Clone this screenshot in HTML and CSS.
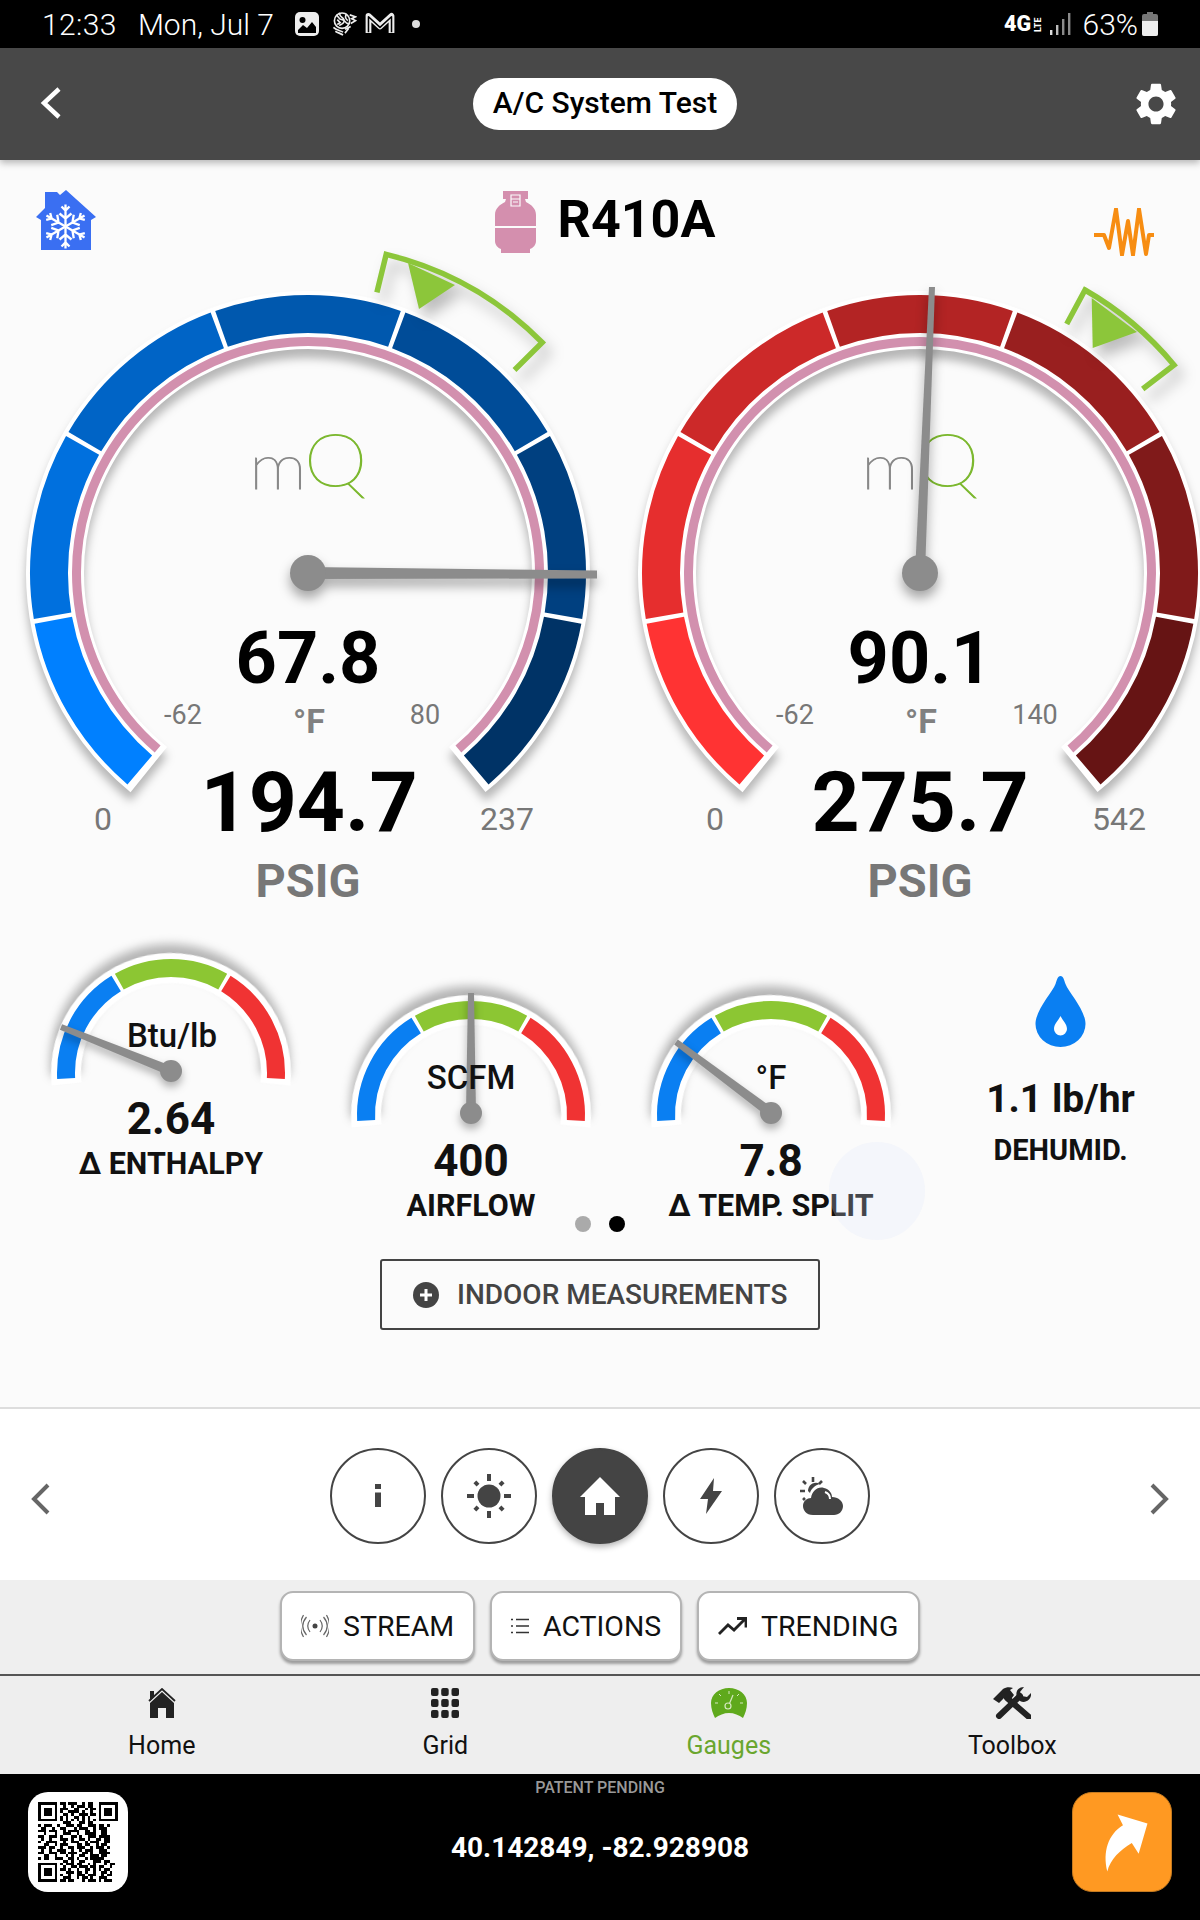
FILE: index.html
```html
<!DOCTYPE html>
<html lang="en">
<head>
    <meta charset="UTF-8">
    <meta name="viewport" content="width=device-width, initial-scale=1.0">
    <title>A/C System Test</title>
    <link rel="stylesheet" href="styles.css">
</head>
<body>
<div class="app">

    <!-- phone status bar -->
    <div class="statusbar">
        <span class="clock">12:33</span>
        <span class="date">Mon, Jul 7</span>
        <svg class="st-icon st-image" viewBox="0 0 24 24"><rect width="24" height="24" rx="5" fill="#eee"/><circle cx="7.500" cy="8" r="3" fill="#000"/><path d="M3 21v-3l5-5 4 3 5-6 4 5v6z" fill="#000"/></svg>
        <svg class="st-icon st-globe" viewBox="0 0 27 25" fill="none" stroke="#eee" stroke-width="1.700"><circle cx="12" cy="9" r="8"/><path d="M6 3c3 2 2 5 6 5s3 5 7 4M10 1c-2 4 3 4 4 7s-2 5-5 6M17 2c-2 2-2 5 1 7M7 8l3 3-3 2M20 3l6 2-4 2 4 2-5 3M3 16c3 3 7 3 10 5M5 20c3 2 5 2 8 4M15 18l6-3M15 22l4-5"/></svg>
        <svg class="st-icon st-mail" viewBox="0 0 30 25" fill="none"><path d="M3 22V4l12 11L27 4v18" stroke="#eee" stroke-width="6" stroke-linejoin="round"/><path d="M3 21V5l12 11L27 5v16" stroke="#000" stroke-width="1.600" stroke-linejoin="round"/></svg>
        <span class="st-dot"></span>
        <span class="st-spacer"></span>
        <svg class="st-net" viewBox="0 0 38 26"><text class="st-4g" x="0" y="20" textLength="27" lengthAdjust="spacingAndGlyphs">4G</text><text class="st-lte" transform="translate(37 21) rotate(-90)">LTE</text></svg>
        <svg class="st-signal" viewBox="0 0 21 22" fill="#8a8a8a"><rect y="17" width="2.400" height="5" fill="#ddd"/><rect x="6" y="12" width="2.400" height="10" fill="#bbb"/><rect x="12" y="6" width="2.400" height="16"/><rect x="18" width="2.400" height="22"/></svg>
        <span class="battery-pct">63%</span>
        <svg class="st-battery" viewBox="0 0 16 24"><path d="M5 0h6v2h3a2 2 0 0 1 2 2v18a2 2 0 0 1-2 2H2a2 2 0 0 1-2-2V4a2 2 0 0 1 2-2h3z" fill="#777"/><path d="M0 9h16v13a2 2 0 0 1-2 2H2a2 2 0 0 1-2-2z" fill="#eee"/></svg>
    </div>

    <header class="appbar">
        <svg class="back-icon" viewBox="0 0 22 32" fill="none" stroke="#fff" stroke-width="4.500"><path d="M19 2L4 16l15 14"/></svg>
        <div class="title-pill">A/C System Test</div>
        <svg class="gear-icon" viewBox="2.400 2 19.200 20" fill="#fff"><path d="M19.14 12.94c.04-.3.06-.61.06-.94 0-.32-.02-.64-.07-.94l2.03-1.58c.18-.14.23-.41.12-.61l-1.92-3.32c-.12-.22-.37-.29-.59-.22l-2.39.96c-.5-.38-1.03-.7-1.62-.94l-.36-2.54c-.04-.24-.24-.41-.48-.41h-3.84c-.24 0-.43.17-.47.41l-.36 2.54c-.59.24-1.13.57-1.62.94l-2.39-.96c-.22-.08-.47 0-.59.22L2.74 8.87c-.12.21-.08.47.12.61l2.03 1.58c-.05.3-.09.63-.09.94s.02.64.07.94l-2.03 1.58c-.18.14-.23.41-.12.61l1.92 3.32c.12.22.37.29.59.22l2.39-.96c.5.38 1.03.7 1.62.94l.36 2.54c.05.24.24.41.48.41h3.84c.24 0 .44-.17.47-.41l.36-2.54c.59-.24 1.13-.56 1.62-.94l2.39.96c.22.08.47 0 .59-.22l1.92-3.32c.12-.22.07-.47-.12-.61l-2.01-1.58zM12 15.6c-1.98 0-3.6-1.62-3.6-3.6s1.62-3.6 3.6-3.6 3.6 1.62 3.6 3.6-1.62 3.6-3.6 3.6z"/></svg>
    </header>

    <main class="content">
        <div class="refrigerant-row">
            <svg class="house-icon" viewBox="0 0 60 60">
                <path d="M0 27l9-9V2h12l3 3 6-5 30 27-5 3v30H5V30z" fill="#3a6ff2"/>
                <g transform="translate(29.500 36.500)" fill="none" stroke="#fff" stroke-width="2.300">
                    <g id="flakeArm"><path d="M0 0v-22M-4 -20l4 4 4-4M-6 -13l6 5 6-5"/></g>
                    <use href="#flakeArm" transform="rotate(60)"/>
                    <use href="#flakeArm" transform="rotate(120)"/>
                    <use href="#flakeArm" transform="rotate(180)"/>
                    <use href="#flakeArm" transform="rotate(240)"/>
                    <use href="#flakeArm" transform="rotate(300)"/>
                </g>
            </svg>
            <div class="refrigerant">
                <svg class="tank-icon" viewBox="0 0 41 63">
                    <path d="M8 1h25v8h-3l1 3c6 3 10 7 10 13v11H0V25c0-6 4-10 10-13l1-3H8z" fill="#d48fae"/>
                    <path d="M0 38h41v13c0 4-3 7-6 8v4H6v-4c-3-1-6-4-6-8z" fill="#d48fae"/>
                    <path d="M16 5h9v11h-9zM16 9h9M18 12h5" fill="none" stroke="#fbfbfb" stroke-width="1.200"/>
                </svg>
                <span class="refrigerant-name">R410A</span>
            </div>
            <svg class="wave-icon" viewBox="0 0 60 48" fill="none" stroke="#f78d12" stroke-width="4" stroke-linejoin="round"><path d="M0 27h10l5 13 7-39 6 46 6-34 5 34 6-46 7 45 3-19h5"/></svg>
        </div>

        <div class="gauge-row">
            <!-- low side -->
            <svg class="gauge" viewBox="-308 -333 612 680">
                <g class="ring-shadow" fill="none">
                    <circle r="253" stroke="#fff" stroke-width="58" pathLength="360" stroke-dasharray="282 78" transform="rotate(-231)"/>
                </g>
                <g fill="none" stroke-width="38">
                    <circle r="259" pathLength="360" stroke-dasharray="39 321" stroke="#0080ff" transform="rotate(-229.500)"/>
                    <circle r="259" pathLength="360" stroke-dasharray="39 321" stroke="#0070de" transform="rotate(-189.500)"/>
                    <circle r="259" pathLength="360" stroke-dasharray="39 321" stroke="#0064c6" transform="rotate(-149.500)"/>
                    <circle r="259" pathLength="360" stroke-dasharray="39 321" stroke="#0058ae" transform="rotate(-109.500)"/>
                    <circle r="259" pathLength="360" stroke-dasharray="39 321" stroke="#004c98" transform="rotate(-69.500)"/>
                    <circle r="259" pathLength="360" stroke-dasharray="39 321" stroke="#004080" transform="rotate(-29.500)"/>
                    <circle r="259" pathLength="360" stroke-dasharray="39 321" stroke="#003366" transform="rotate(10.500)"/>
                </g>
                <circle class="pink-line" r="231.500" pathLength="360" stroke-dasharray="279 81" transform="rotate(-229.500)"/>
                <g class="marker-shadow">
                    <path class="marker-bracket" d="M68.900 -280.700L78.200 -318.600A328 328 0 0 1 234.200 -230.500L206.500 -203"/>
                    <polygon class="marker-tip" points="100,-310 147,-288 111,-264"/>
                </g>
                <text class="logo-m" transform="translate(-59 -84) scale(1.180 1)">m</text>
                <text class="logo-q" transform="translate(-4 -87) scale(1.120 1)">Q</text>
                <text class="temp-value" x="0" y="110">67.8</text>
                <text class="temp-unit" x="1" y="160">°F</text>
                <text class="scale-small" x="-125" y="151">-62</text>
                <text class="scale-small" x="117" y="151">80</text>
                <text class="scale-big" x="-205" y="257">0</text>
                <text class="scale-big" x="199" y="257">237</text>
                <text class="pressure-value" x="1" y="258">194.7</text>
                <text class="pressure-unit" x="0" y="324">PSIG</text>
                <g class="needle-shadow">
                    <polygon class="needle" points="0,-6 289,-2.500 289,5.500 0,6"/>
                    <circle class="needle" r="18"/>
                </g>
            </svg>

            <!-- high side -->
            <svg class="gauge" viewBox="-308 -333 612 680">
                <g class="ring-shadow" fill="none">
                    <circle r="253" stroke="#fff" stroke-width="58" pathLength="360" stroke-dasharray="282 78" transform="rotate(-231)"/>
                </g>
                <g fill="none" stroke-width="38">
                    <circle r="259" pathLength="360" stroke-dasharray="39 321" stroke="#ff3333" transform="rotate(-229.500)"/>
                    <circle r="259" pathLength="360" stroke-dasharray="39 321" stroke="#e62e2e" transform="rotate(-189.500)"/>
                    <circle r="259" pathLength="360" stroke-dasharray="39 321" stroke="#cc2929" transform="rotate(-149.500)"/>
                    <circle r="259" pathLength="360" stroke-dasharray="39 321" stroke="#b32424" transform="rotate(-109.500)"/>
                    <circle r="259" pathLength="360" stroke-dasharray="39 321" stroke="#991f1f" transform="rotate(-69.500)"/>
                    <circle r="259" pathLength="360" stroke-dasharray="39 321" stroke="#801a1a" transform="rotate(-29.500)"/>
                    <circle r="259" pathLength="360" stroke-dasharray="39 321" stroke="#661414" transform="rotate(10.500)"/>
                </g>
                <circle class="pink-line" r="231.500" pathLength="360" stroke-dasharray="279 81" transform="rotate(-229.500)"/>
                <g class="marker-shadow">
                    <path class="marker-bracket" d="M146.700 -249L165 -283A328 328 0 0 1 254 -208L222.700 -184"/>
                    <polygon class="marker-tip" points="171.700,-275 217,-241 172.700,-225"/>
                </g>
                <text class="logo-m" transform="translate(-59 -84) scale(1.180 1)">m</text>
                <text class="logo-q" transform="translate(-4 -87) scale(1.120 1)">Q</text>
                <text class="temp-value" x="0" y="110">90.1</text>
                <text class="temp-unit" x="1" y="160">°F</text>
                <text class="scale-small" x="-125" y="151">-62</text>
                <text class="scale-small" x="115" y="151">140</text>
                <text class="scale-big" x="-205" y="257">0</text>
                <text class="scale-big" x="199" y="257">542</text>
                <text class="pressure-value" x="0" y="258">275.7</text>
                <text class="pressure-unit" x="0" y="324">PSIG</text>
                <g class="needle-shadow">
                    <polygon class="needle" points="-5,0 5,0 15,-286 9,-286"/>
                    <circle class="needle" r="18"/>
                </g>
            </svg>
        </div>

        <div class="mini-row">
            <div class="mini mini-high">
                <svg class="mini-gauge" viewBox="-130 -124 260 150">
                    <g id="miniDial" fill="none">
                        <circle class="ring-shadow-small" cy="2" r="105" stroke="#fff" stroke-width="30" pathLength="360" stroke-dasharray="192 168" transform="rotate(-186 0 2)"/>
                        <g stroke-width="18">
                            <circle cy="2" r="105" pathLength="360" stroke-dasharray="61.500 298.500" stroke="#0a7ff2" transform="rotate(-183 0 2)"/>
                            <circle cy="2" r="105" pathLength="360" stroke-dasharray="59 301" stroke="#8cc633" transform="rotate(-119.500 0 2)"/>
                            <circle cy="2" r="105" pathLength="360" stroke-dasharray="61.500 298.500" stroke="#f03333" transform="rotate(-58.500 0 2)"/>
                        </g>
                    </g>
                    <g class="needle-shadow-small">
                        <polygon class="needle" points="1.900,-4.600 -1.900,4.600 -111.100,-41.200 -108.900,-46.800"/>
                        <circle class="needle" r="11"/>
                    </g>
                    <text class="mini-unit" x="1" y="-24">Btu/lb</text>
                </svg>
                <div class="mini-value">2.64</div>
                <div class="mini-label">Δ ENTHALPY</div>
            </div>
            <div class="mini">
                <svg class="mini-gauge" viewBox="-130 -124 260 150">
                    <use href="#miniDial"/>
                    <g class="needle-shadow-small">
                        <polygon class="needle" points="-5,0 5,0 3,-120 -3,-120"/>
                        <circle class="needle" r="11"/>
                    </g>
                    <text class="mini-unit" x="0" y="-24">SCFM</text>
                </svg>
                <div class="mini-value">400</div>
                <div class="mini-label">AIRFLOW</div>
            </div>
            <div class="mini">
                <svg class="mini-gauge" viewBox="-130 -124 260 150">
                    <use href="#miniDial"/>
                    <g class="needle-shadow-small">
                        <polygon class="needle" points="3,-4 -3,4 -96.800,-68.600 -93.200,-73.400"/>
                        <circle class="needle" r="11"/>
                    </g>
                    <text class="mini-unit" x="0" y="-24">°F</text>
                </svg>
                <div class="mini-value">7.8</div>
                <div class="mini-label">Δ TEMP. SPLIT</div>
            </div>
            <div class="dehumid">
                <svg class="drop-icon" viewBox="0 0 51 71"><path d="M25.500 0c3 0 3.500 4 5 8 3 8 20 26 20 40a25 23 0 0 1-50 0C.5 34 17.500 16 20.500 8c1.500-4 2-8 5-8z" fill="#0a7ff2"/><path d="M19 53c0-5 4-8 6.500-13 2.500 5 6.500 8 6.500 13a6.500 6.500 0 0 1-13 0z" fill="#fff"/></svg>
                <div class="dehumid-value">1.1 lb/hr</div>
                <div class="dehumid-label">DEHUMID.</div>
            </div>
        </div>

        <div class="pager"><span class="pager-dot"></span><span class="pager-dot active"></span></div>

        <button class="outline-button">
            <svg class="plus-icon" viewBox="0 0 26 26"><circle cx="13" cy="13" r="13" fill="#444"/><path d="M13 7v12M7 13h12" stroke="#fff" stroke-width="3"/></svg>
            INDOOR MEASUREMENTS
        </button>
        <div class="ripple"></div>
    </main>

    <section class="tabs">
        <svg class="tab-arrow" viewBox="0 0 20 32" fill="none" stroke="#666" stroke-width="4"><path d="M18 2L4 16l14 14"/></svg>
        <div class="tab-group">
            <div class="tab">
                <svg class="info-icon" viewBox="0 0 6 23" fill="#444"><rect width="6" height="5"/><rect y="8.500" width="6" height="14.500"/></svg>
            </div>
            <div class="tab">
                <svg class="sun-icon" viewBox="-22 -22 44 44" fill="#444"><circle r="11.500"/><rect x="-2" y="-22" width="4" height="7"/><rect x="-2" y="15" width="4" height="7"/><rect x="-22" y="-2" width="7" height="4"/><rect x="15" y="-2" width="7" height="4"/><g transform="rotate(45)"><rect x="-2" y="-20" width="4" height="4.500"/><rect x="-2" y="15.500" width="4" height="4.500"/><rect x="-20" y="-2" width="4.500" height="4"/><rect x="15.500" y="-2" width="4.500" height="4"/></g></svg>
            </div>
            <div class="tab active">
                <svg class="tab-home-icon" viewBox="0 0 40 38" fill="#fff"><path d="M20 0l20 20h-5v18H24V26h-8v12H5V20H0z"/></svg>
            </div>
            <div class="tab">
                <svg class="bolt-icon" viewBox="0 0 22 36" fill="#444"><path d="M14 0L0 21h8L6 36l16-23h-9z"/></svg>
            </div>
            <div class="tab">
                <svg class="cloud-icon" viewBox="0 0 44 38" fill="#444">
                    <path d="M13 38C6 38 3 33 3 29c0-5 4-8 8-8 1-7 7-12 13-10 5 1 8 5 8 9 6 0 11 4 11 9 0 5-4 9-9 9z"/>
                    <path d="M8 14a8 8 0 0 1 10-8l2 1c-5 1-9 5-10 9z"/>
                    <path d="M13 0v5M3 4l3 3M0 14h5M3 23l2-2M22 4l-3 3" stroke="#444" stroke-width="2.600" fill="none"/>
                    <path d="M25 15c3 1 5 4 5 7" stroke="#fff" stroke-width="2" fill="none"/>
                </svg>
            </div>
        </div>
        <svg class="tab-arrow" viewBox="0 0 20 32" fill="none" stroke="#666" stroke-width="4"><path d="M2 2l14 14L2 30"/></svg>
    </section>

    <section class="actions">
        <button class="action-button btn-stream">
            <svg class="stream-icon" viewBox="0 0 28 24" fill="none" stroke="#666" stroke-width="1.200"><circle cx="14" cy="12" r="2.500" fill="#444" stroke="none"/><path d="M9 6c-3 4-3 8 0 12M19 6c3 4 3 8 0 12M5.500 3c-5 6-5 12 0 18M22.500 3c5 6 5 12 0 18M2.500 1c-4 7-4 15 0 22M25.500 1c4 7 4 15 0 22"/></svg>
            STREAM
        </button>
        <button class="action-button btn-actions">
            <svg class="list-icon" viewBox="0 0 18 16" fill="none" stroke="#333" stroke-width="1.300"><path d="M0 1.500h2M5 1.500h13M0 8h2M5 8h13M0 14.500h2M5 14.500h13"/></svg>
            ACTIONS
        </button>
        <button class="action-button btn-trending">
            <svg class="trend-icon" viewBox="0 0 29 18" fill="none" stroke="#222" stroke-width="2.800"><path d="M1 17l9-9 6 5L27 2M19 1.500h9v9"/></svg>
            TRENDING
        </button>
    </section>

    <nav class="bottom-nav">
        <div class="nav-item">
            <svg class="nav-icon" viewBox="0 0 30 30"><path d="M2 13L15 1l13 12" fill="none" stroke="#222" stroke-width="1.800"/><path d="M3 3h4v6L3 13z" fill="#222"/><path d="M15 4l12 11v15h-8V20h-8v10H3V15z" fill="#222"/></svg>
            <span>Home</span>
        </div>
        <div class="nav-item">
            <svg class="nav-icon" viewBox="0 0 28 30" fill="#222">
                <rect width="7.500" height="8" rx="2"/><rect x="10.200" width="7.500" height="8" rx="2"/><rect x="20.500" width="7.500" height="8" rx="2"/>
                <rect y="11" width="7.500" height="8" rx="2"/><rect x="10.200" y="11" width="7.500" height="8" rx="2"/><rect x="20.500" y="11" width="7.500" height="8" rx="2"/>
                <rect y="22" width="7.500" height="8" rx="2"/><rect x="10.200" y="22" width="7.500" height="8" rx="2"/><rect x="20.500" y="22" width="7.500" height="8" rx="2"/>
            </svg>
            <span>Grid</span>
        </div>
        <div class="nav-item nav-active">
            <svg class="nav-icon" viewBox="0 0 36 30">
                <path d="M18 0c10 0 18 6.500 18 15 0 6-2 11-4 15-4-3-9-5-14-5s-10 2-14 5C2 26 0 21 0 15 0 6.500 8 0 18 0z" fill="#5fa91c"/>
                <path d="M18 3v3M8 6l2 2M28 6l-2 2M4 15h3M32 15h-3" stroke="#d6e8c0" stroke-width="1"/>
                <circle cx="17" cy="18" r="3" fill="none" stroke="#d6e8c0" stroke-width="1.200"/>
                <path d="M18.500 15.500L22 7" stroke="#d6e8c0" stroke-width="1.200"/>
            </svg>
            <span>Gauges</span>
        </div>
        <div class="nav-item">
            <svg class="nav-icon tool-icon" viewBox="0 0 38 32">
                <path d="M14 11l22 19" stroke="#222" stroke-width="6" stroke-linecap="round"/>
                <path d="M0 12L10 2c3-2 7-2 10-1l-3 2 4 5-5 7-5-4-5 5z" fill="#222"/>
                <path d="M6 29L27 9" stroke="#222" stroke-width="6" stroke-linecap="round"/>
                <path d="M24 10c-2-5 1-10 7-10l-4 5 2 4 5 1 4-4c1 6-5 11-11 8z" fill="#222"/>
            </svg>
            <span>Toolbox</span>
        </div>
    </nav>

    <footer class="footer">
        <div class="qr-box">
            <svg class="qr-code" viewBox="0 0 29 29" shape-rendering="crispEdges">
                <g fill="none" stroke="#000">
                    <path d="M.5 .5h6v6h-6zM22.500 .5h6v6h-6zM.5 22.500h6v6h-6z"/>
                    <path d="M8 .5h2m1 0h3m2 0h1m1 0h2M9 1.500h1m2 0h1m1 0h3m1 0h2M8 2.500h3m2 0h2m2 0h1m1 0h2M8 3.500h1m2 0h4m1 0h1m2 0h1M9 4.500h2m1 0h1m2 0h3m1 0h2M8 5.500h1m1 0h1m2 0h2m1 0h1m1 0h1M8 6.500h1m1 0h1m1 0h1m1 0h1m1 0h1m1 0h1m1 0h1M9 7.500h3m3 0h2m1 0h2M0 8.500h1m1 0h3m2 0h1m2 0h3m1 0h2m2 0h3m1 0h2m1 0h1M1 9.500h2m2 0h1m2 0h2m3 0h1m1 0h3m2 0h1m1 0h3M0 10.500h3m1 0h3m2 0h1m1 0h4m2 0h2m1 0h1m2 0h2M2 11.500h1m3 0h1m2 0h3m2 0h1m2 0h4m2 0h2M0 12.500h2m2 0h3m1 0h1m3 0h2m1 0h1m2 0h3m1 0h4M1 13.500h1m2 0h1m3 0h3m1 0h1m2 0h2m1 0h1m2 0h2m1 0h2M0 14.500h1m2 0h4m2 0h1m2 0h3m2 0h1m1 0h3m2 0h2M2 15.500h2m2 0h1m1 0h3m3 0h2m1 0h2m2 0h1m1 0h2M0 16.500h3m1 0h2m2 0h1m2 0h2m1 0h3m2 0h1m1 0h3m1 0h1M1 17.500h1m2 0h1m2 0h3m2 0h1m2 0h1m1 0h3m2 0h3M0 18.500h2m2 0h3m1 0h2m1 0h3m2 0h2m1 0h1m2 0h4M2 19.500h2m2 0h1m3 0h1m1 0h1m2 0h2m2 0h3m1 0h2M0 20.500h1m1 0h2m2 0h3m2 0h2m1 0h1m2 0h1m1 0h5M9 21.500h2m1 0h1m2 0h2m3 0h3m1 0h2M8 22.500h1m1 0h3m1 0h2m2 0h1m1 0h1m3 0h1m1 0h2M9 23.500h1m2 0h2m1 0h3m1 0h2m1 0h2m2 0h1M8 24.500h2m1 0h1m2 0h1m2 0h2m1 0h1m1 0h1m1 0h2M10 25.500h3m1 0h2m1 0h1m2 0h1m2 0h2m1 0h1M8 26.500h1m2 0h1m2 0h3m1 0h3m2 0h1m1 0h2M9 27.500h3m2 0h1m1 0h2m1 0h1m2 0h3M8 28.500h2m1 0h2m3 0h1m1 0h3m1 0h1m1 0h3"/>
                </g>
                <path d="M2 2h3v3H2zM24 2h3v3h-3zM2 24h3v3H2z"/>
            </svg>
        </div>
        <div class="footer-center">
            <div class="patent">PATENT PENDING</div>
            <div class="coords">40.142849, -82.928908</div>
        </div>
        <div class="share-box">
            <svg class="share-icon" viewBox="0 0 100 100"><path d="M45.500 22L76 31 67 62 60 51C48 58 38 68 35 80 30 60 36 42 51 33z" fill="#fff"/></svg>
        </div>
    </footer>
</div>
</body>
</html>
```

FILE: styles.css
```css
* {
    box-sizing: border-box;
}

body {
    margin: 0;
    font-family: Roboto, "Liberation Sans", sans-serif;
    background: #fbfbfb;
}

.app {
    width: 1200px;
    height: 1920px;
    overflow: hidden;
    display: flex;
    flex-direction: column;
}

/* status bar */
.statusbar {
    height: 48px;
    background: #000;
    color: #fff;
    display: flex;
    align-items: center;
    padding: 0 42px;
    font-size: 30px;
    font-weight: 300;
}

.clock {
    margin-right: 21px;
    letter-spacing: 0.4px;
}

.st-icon {
    height: 24px;
}

.st-image {
    width: 24px;
    margin-left: 21px;
}

.st-globe {
    width: 27px;
    margin-left: 11px;
}

.st-mail {
    width: 30px;
    margin-left: 8px;
}

.st-dot {
    width: 8px;
    height: 8px;
    border-radius: 50%;
    background: #ddd;
    margin-left: 17px;
}

.st-spacer {
    flex: 1;
}

.st-net {
    width: 38px;
    height: 26px;
}

.st-4g {
    font-size: 22px;
    font-weight: 900;
    fill: #fff;
}

.st-lte {
    font-size: 9px;
    font-weight: 700;
    fill: #fff;
}

.st-signal {
    width: 21px;
    height: 22px;
    margin-left: 8px;
}

.battery-pct {
    margin-left: 12px;
}

.st-battery {
    width: 16px;
    height: 24px;
    margin-left: 4px;
}

/* app bar */
.appbar {
    height: 112px;
    background: #484848;
    display: flex;
    align-items: center;
    justify-content: space-between;
    padding: 0 23px 0 40px;
    position: relative;
    z-index: 2;
    box-shadow: 0 3px 7px rgba(0,0,0,0.28);
}

.back-icon {
    width: 22px;
    height: 32px;
    margin-top: -2px;
}

.title-pill {
    width: 264px;
    height: 52px;
    margin-left: 13px;
    border-radius: 26px;
    background: #fff;
    color: #000;
    font-size: 30px;
    font-weight: 500;
    line-height: 50px;
    text-align: center;
}

.gear-icon {
    width: 42px;
    height: 42px;
}

/* main area */
.content {
    height: 1249px;
    background: #fbfbfb;
    display: flex;
    flex-direction: column;
    position: relative;
    border-bottom: 2px solid #ddd;
}

.refrigerant-row {
    height: 80px;
    display: flex;
    justify-content: space-between;
    align-items: flex-start;
    padding: 0 46px 0 36px;
}

.house-icon {
    width: 60px;
    height: 60px;
    margin-top: 30px;
}

.refrigerant {
    display: flex;
    align-items: flex-start;
    gap: 22px;
    margin-left: 20px;
    margin-top: 30px;
}

.tank-icon {
    width: 41px;
    height: 63px;
}

.refrigerant-name {
    font-size: 52px;
    font-weight: 700;
    line-height: 52px;
    margin-top: 4px;
    color: #000;
}

.wave-icon {
    width: 60px;
    height: 48px;
    margin-top: 48px;
}

/* big gauges */
.gauge-row {
    display: flex;
    height: 680px;
}

.gauge {
    width: 612px;
    height: 680px;
    flex: none;
    overflow: visible;
}

.ring-shadow {
    filter: drop-shadow(0 9px 5px rgba(0,0,0,0.28));
}

.pink-line {
    fill: none;
    stroke: #d290ae;
    stroke-width: 9;
}

.marker-shadow {
    filter: drop-shadow(6px 10px 7px rgba(0,0,0,0.25));
}

.marker-bracket {
    fill: none;
    stroke: #8cc63a;
    stroke-width: 5.5;
}

.marker-tip {
    fill: #8cc63a;
}

.logo-m {
    font-family: Lato, Roboto, sans-serif;
    font-size: 62px;
    font-weight: 100;
    fill: #888;
    stroke: #888;
    stroke-width: 1;
}

.logo-q {
    font-family: Lato, Roboto, sans-serif;
    font-size: 72px;
    font-weight: 100;
    fill: #7cb82f;
    stroke: #7cb82f;
    stroke-width: 1;
}

.gauge text {
    text-anchor: middle;
}

.gauge .logo-m,
.gauge .logo-q {
    text-anchor: start;
}

.temp-value {
    font-size: 72px;
    font-weight: 700;
    fill: #000;
}

.temp-unit {
    font-size: 34px;
    font-weight: 700;
    fill: #808080;
}

.scale-small {
    font-size: 27px;
    fill: #777;
}

.scale-big {
    font-size: 32px;
    fill: #777;
}

.pressure-value {
    font-size: 84px;
    font-weight: 700;
    fill: #000;
}

.pressure-unit {
    font-size: 47px;
    font-weight: 700;
    fill: #777;
}

.needle {
    fill: #8c8c8c;
}

.needle-shadow {
    filter: drop-shadow(0 7px 6px rgba(0,0,0,0.35));
}

/* small gauges */
.mini-row {
    height: 296px;
    display: flex;
    padding-left: 21px;
}

.mini {
    width: 300px;
    flex: none;
    margin-top: 69px;
    display: flex;
    flex-direction: column;
    align-items: center;
}

.mini-high {
    margin-top: 27px;
}

.mini-gauge {
    width: 260px;
    height: 150px;
    overflow: visible;
}

.ring-shadow-small {
    filter: drop-shadow(0 9px 5px rgba(0,0,0,0.28));
}

.needle-shadow-small {
    filter: drop-shadow(0 5px 4px rgba(0,0,0,0.3));
}

.mini-unit {
    font-size: 33px;
    font-weight: 500;
    fill: #111;
    text-anchor: middle;
}

.mini-value {
    font-size: 44px;
    font-weight: 700;
    line-height: 44px;
    color: #111;
}

.mini-label {
    font-size: 30.5px;
    font-weight: 700;
    line-height: 32px;
    margin-top: 7px;
    color: #111;
}

.dehumid {
    width: 279px;
    flex: none;
    margin-top: 56px;
    display: flex;
    flex-direction: column;
    align-items: center;
}

.drop-icon {
    width: 51px;
    height: 71px;
}

.dehumid-value {
    font-size: 39px;
    font-weight: 700;
    line-height: 40px;
    margin-top: 32px;
    color: #111;
}

.dehumid-label {
    font-size: 29px;
    font-weight: 700;
    line-height: 30px;
    margin-top: 16px;
    color: #111;
}

.pager {
    height: 16px;
    display: flex;
    justify-content: center;
    gap: 18px;
    margin-bottom: 27px;
}

.pager-dot {
    width: 16px;
    height: 16px;
    border-radius: 50%;
    background: #aaa;
}

.pager-dot.active {
    background: #000;
}

.outline-button {
    align-self: center;
    width: 440px;
    height: 71px;
    background: transparent;
    border: 2.5px solid #444;
    border-radius: 3px;
    display: flex;
    align-items: center;
    gap: 18px;
    padding: 0 0 0 31px;
    font-family: inherit;
    font-size: 28px;
    font-weight: 500;
    color: #444;
}

.plus-icon {
    width: 26px;
    height: 26px;
}

.ripple {
    position: absolute;
    left: 829px;
    top: 982px;
    width: 96px;
    height: 98px;
    border-radius: 50%;
    background: rgba(225,232,250,0.25);
}

/* tab strip */
.tabs {
    height: 171px;
    background: #fff;
    display: flex;
    align-items: center;
    justify-content: space-between;
    padding: 2px 30px 0;
}

.tab-arrow {
    width: 20px;
    height: 32px;
    margin-top: 6px;
}

.tab-group {
    display: flex;
    gap: 15px;
}

.tab {
    width: 96px;
    height: 96px;
    border: 2px solid #444;
    border-radius: 50%;
    display: flex;
    align-items: center;
    justify-content: center;
}

.tab.active {
    background: #444;
    box-shadow: 0 3px 6px rgba(0,0,0,0.3);
}

.info-icon {
    width: 6px;
    height: 23px;
}

.sun-icon {
    width: 44px;
    height: 44px;
}

.tab-home-icon {
    width: 40px;
    height: 38px;
}

.bolt-icon {
    width: 22px;
    height: 36px;
}

.cloud-icon {
    width: 44px;
    height: 38px;
}

/* action buttons */
.actions {
    height: 96px;
    background: #efefef;
    border-bottom: 2px solid #555;
    display: flex;
    justify-content: center;
    gap: 15px;
    padding-top: 11px;
}

.action-button {
    height: 70px;
    background: #fff;
    border: 2px solid #b4b4b4;
    border-radius: 13px;
    box-shadow: 0 3px 3px rgba(0,0,0,0.35);
    display: flex;
    align-items: center;
    gap: 14px;
    padding: 0 0 0 19px;
    font-family: inherit;
    font-size: 28.5px;
    color: #111;
}

.btn-stream {
    width: 195px;
}

.btn-actions {
    width: 192px;
}

.btn-trending {
    width: 223px;
}

.stream-icon {
    width: 28px;
    height: 24px;
}

.list-icon {
    width: 18px;
    height: 16px;
}

.trend-icon {
    width: 29px;
    height: 18px;
}

/* bottom nav */
.bottom-nav {
    height: 98px;
    background: #eee;
    display: grid;
    grid-template-columns: repeat(4, 283.5px);
    padding: 12px 0 0 20px;
}

.nav-item {
    display: flex;
    flex-direction: column;
    align-items: center;
    gap: 13px;
    font-size: 25px;
    line-height: 30px;
    color: #111;
}

.nav-icon {
    height: 30px;
}

.tool-icon {
    height: 32px;
    margin: -1px 0;
}

.nav-active {
    color: #6aa62e;
}

/* footer */
.footer {
    flex: 1;
    background: #000;
    display: flex;
    align-items: flex-start;
    padding: 18px 28px 0;
}

.qr-box {
    width: 100px;
    height: 100px;
    background: #fff;
    border-radius: 20px;
    display: flex;
    align-items: center;
    justify-content: center;
}

.qr-code {
    width: 80px;
    height: 80px;
}

.footer-center {
    flex: 1;
    text-align: center;
    margin-top: -14px;
}

.patent {
    font-size: 16px;
    font-weight: 500;
    line-height: 20px;
    color: #999;
}

.coords {
    font-size: 28px;
    font-weight: 700;
    line-height: 32px;
    margin-top: 34px;
    color: #fff;
}

.share-box {
    width: 100px;
    height: 100px;
    background: #ff9922;
    border: 1px solid #c47a20;
    border-radius: 20px;
}

.share-icon {
    display: block;
    width: 100%;
    height: 100%;
}
```
